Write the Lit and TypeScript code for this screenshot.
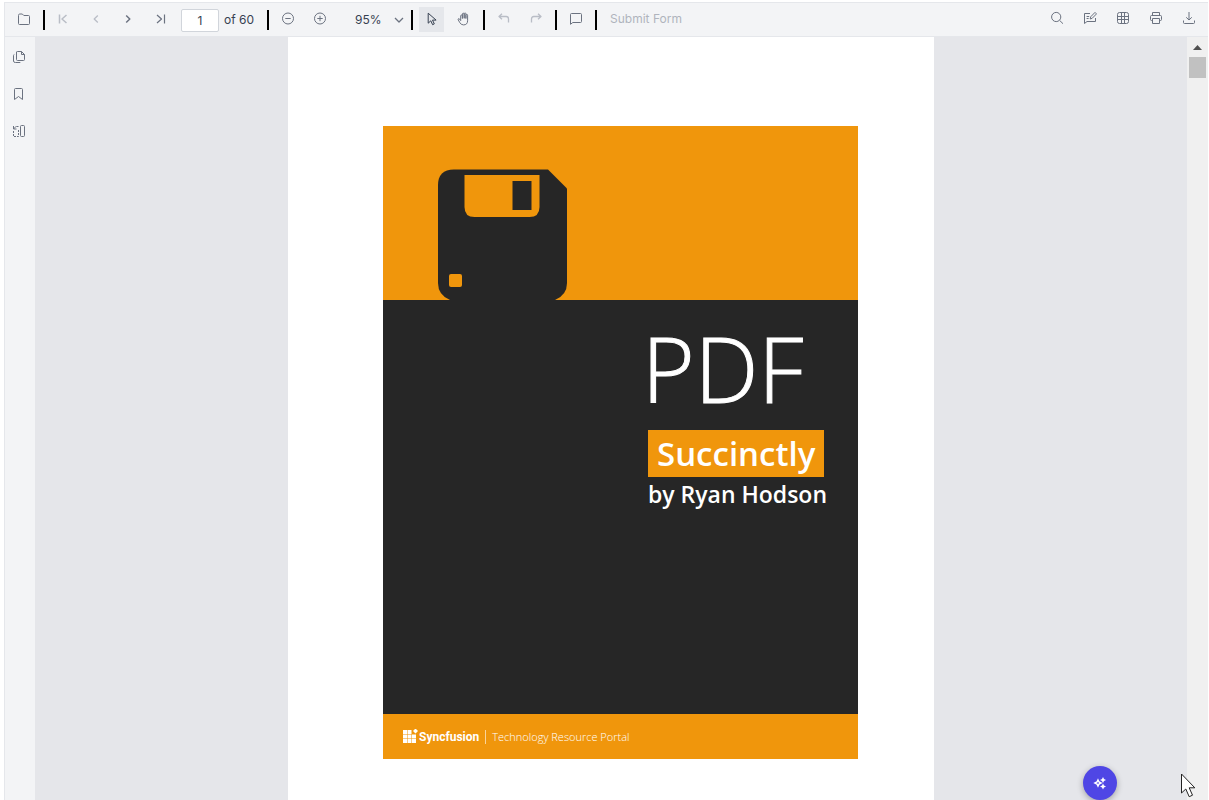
import { LitElement, html, css, svg } from "lit";
import { customElement, property, state } from "lit/decorators.js";

const icons = {
  folder: svg`<path d="M1.500 3.500q0-1.500 1.200-1.500h2.600l1.500 1.500h4.700q1 0 1 1v7q0 1-1 1h-9q-1 0-1-1z"/>`,
  first: svg`<path stroke-width="1.500" d="M2.500 2.500v9M9.500 3 5 7l4.500 4"/>`,
  prev: svg`<path stroke-width="1.300" d="M8.800 3.500 5.200 7l3.600 3.500"/>`,
  next: svg`<path stroke-width="1.500" d="M5.200 3.500 8.800 7l-3.600 3.500"/>`,
  last: svg`<path stroke-width="1.200" d="M11.500 2.500v9M4 3l4.500 4L4 11"/>`,
  zoomOut: svg`<circle cx="7" cy="6.500" r="5.500"/><path d="M4.300 6.500h5.400"/>`,
  zoomIn: svg`<circle cx="7" cy="6.500" r="5.500"/><path d="M4.300 6.500h5.400M7 3.800v5.400"/>`,
  chevron: svg`<path stroke-width="1.300" d="M3 5l4 4 4-4"/>`,
  select: svg`<path d="M3.200 1.200v10l2.600-2.400 1.800 3.900 1.700-.8-1.800-3.800h3.600z"/>`,
  hand: svg`<path d="M3.700 8.600V3.800q.1-.8.800-.8t.9.800v2.700V2q.1-.8.900-.8t.9.800v4.300V1.800q.1-.8.900-.8t.8.800v4.700V3.200q.1-.8.900-.8t.8.800v5.600q-.1 4.100-4.100 4.100-2.500 0-3.700-2.300L1.200 7.800q-.4-1 .4-1.200.6-.1 1 .5z"/>`,
  undo: svg`<path stroke-width="1.300" d="M5 1.700 2 4.500l3 2.800M2.200 4.500h7q2.300 0 2.300 2.400v3.600"/>`,
  redo: svg`<path stroke-width="1.300" d="m9 1.700 3 2.800-3 2.800M11.800 4.500h-7Q2.500 4.500 2.500 6.900v3.600"/>`,
  comment: svg`<path d="M1.500 12.300V2.500q0-1 1-1h9q1 0 1 1v7q0 1-1 1H3.800z"/>`,
  search: svg`<circle cx="6.200" cy="6" r="4.600"/><path d="m9.600 9.400 3.400 3.300"/>`,
  annotate: svg`<path d="M7 2.500H1.500v10L4 10.500h8.500V7M3.600 5.500h2.600M3.600 7.500h2M7.200 8l.5-2.200L12 1.400l1.500 1.500-4.300 4.400z"/>`,
  form: svg`<rect x="1.500" y="1.500" width="11" height="11" rx="2"/><path d="M5.500 1.500v11M8.500 1.500v11M1.500 5.500h11M1.500 8.500h11"/>`,
  print: svg`<path d="M3.500 4.500v-3h7v3M3.500 9.500h-1q-1 0-1-1v-3q0-1 1-1h9q1 0 1 1v3q0 1-1 1h-1M3.500 7.500h7v5h-7z"/>`,
  download: svg`<path d="M7 1v8M4.200 6.300 7 9l2.800-2.700M1.500 9.500v2q0 1 1 1h9q1 0 1-1v-2"/>`,
  pages: svg`<path d="M4.500 2q0-.5 1-.5h4l3 3v5q0 1-1 1h-6q-1 0-1-1zM9.500 1.500v3h3M2.300 4.500q-.8.200-.8 1V11q0 1.500 2 1.500h4.800"/>`,
  bookmark: svg`<path d="M2.500 2.500q0-1 1-1h6q1 0 1 1v10l-4-3-4 3z"/>`,
  organize: svg`<rect x="8.500" y="1.500" width="4" height="11" rx="1"/><path d="M6.500 2.500h-2M1.500 2v3h3M1.500 5l2.800-2.800"/><path stroke-dasharray="2 1" d="M1.500 7v5.500h5V5"/>`,
};
type IconName = keyof typeof icons;

@customElement("pdf-icon")
class PdfIcon extends LitElement {
  static styles = css`
    :host { display: block; width: 14px; height: 14px; }
    svg { display: block; width: 14px; height: 14px; fill: none; stroke: currentColor; stroke-linejoin: round; }
  `;
  @property() name: IconName = "folder";
  render() {
    return html`<svg viewBox="0 0 14 14" aria-hidden="true">${icons[this.name]}</svg>`;
  }
}

@customElement("pdf-toolbar")
class PdfToolbar extends LitElement {
  static styles = css`
    :host {
      display: flex; align-items: center; justify-content: space-between;
      height: 34px; padding: 0 7px 0 6px; box-sizing: border-box;
      background: #f3f4f6; border-bottom: 1px solid #e5e7eb;
      font: 12px/16px Inter, sans-serif; color: #374151;
    }
    .group { display: flex; align-items: center; gap: 7px; }
    .actions { gap: 8px; }
    .tool {
      display: grid; place-items: center; width: 25px; height: 25px; box-sizing: border-box;
      padding: 0 0 1px 1px; border: 0; background: none; color: #6b7280;
    }
    .actions .tool { padding-bottom: 3px; }
    .tool:disabled { color: #b9bdc6; }
    .active { background: #e5e7eb; color: #374151; }
    .line { width: 2px; height: 20px; margin-right: -1px; background: #000; }
    .pager { display: flex; align-items: center; gap: 5px; margin: 0 6px 0 2px; padding-top: 1px; }
    .page {
      width: 38px; height: 23px; box-sizing: border-box; padding: 0;
      border: 1px solid #d1d5db; border-radius: 2px; background: #fff;
      text-align: center; font: inherit; color: inherit;
    }
    .zoom { display: grid; grid-template-columns: 1fr 14px; align-items: center; width: 65px; color: #6b7280; }
    .level {
      grid-area: 1 / 1 / 2 / 3; height: 25px; padding: 0 0 0 16px; border: 0;
      appearance: none; background: none; font: inherit; color: #374151;
    }
    .arrow { grid-area: 1 / 2; margin: 0 -2px 0 2px; pointer-events: none; }
    .submit { padding: 0 7px 1px; border: 0; background: none; font: inherit; color: #b0b4bd; }
  `;
  @state() private mode = "select";

  private tool(icon: IconName, label: string, disabled = false) {
    return html`<button class="tool" aria-label=${label} title=${label} ?disabled=${disabled}>
      <pdf-icon name=${icon}></pdf-icon></button>`;
  }
  private modeTool(icon: IconName, label: string) {
    const on = this.mode === icon;
    return html`<button class="tool ${on ? "active" : ""}" aria-label=${label} aria-pressed=${on}
      @click=${() => (this.mode = icon)}><pdf-icon name=${icon}></pdf-icon></button>`;
  }
  render() {
    const line = html`<span class="line"></span>`;
    return html`
      <div class="group">
        ${this.tool("folder", "Open file")} ${line}
        ${this.tool("first", "First page", true)} ${this.tool("prev", "Previous page", true)}
        ${this.tool("next", "Next page")} ${this.tool("last", "Last page")}
        <label class="pager"><input class="page" aria-label="Page number" .value=${"1"} /><span>of 60</span></label>
        ${line} ${this.tool("zoomOut", "Zoom out")} ${this.tool("zoomIn", "Zoom in")}
        <label class="zoom">
          <select class="level" aria-label="Zoom level"><option>95%</option><option>100%</option><option>125%</option></select>
          <pdf-icon class="arrow" name="chevron"></pdf-icon>
        </label>
        ${line} ${this.modeTool("select", "Text selection")} ${this.modeTool("hand", "Pan")}
        ${line} ${this.tool("undo", "Undo", true)} ${this.tool("redo", "Redo", true)}
        ${line} ${this.tool("comment", "Add comment")} ${line}
        <button class="submit" disabled>Submit Form</button>
      </div>
      <div class="group actions">
        ${this.tool("search", "Search")} ${this.tool("annotate", "Annotate")}
        ${this.tool("form", "Form designer")} ${this.tool("print", "Print")} ${this.tool("download", "Download")}
      </div>`;
  }
}

@customElement("book-cover")
class BookCover extends LitElement {
  static styles = css`
    :host { display: block; background: #262626; color: #fff; font-family: "Open Sans", "Noto Sans", sans-serif; }
    .band { display: flex; padding: 43px 55px 0; background: #f0960c; }
    .disk { display: block; width: 129px; height: 131px; }
    .body { display: flex; flex-direction: column; align-items: flex-start; height: 414px; padding-left: 265px; box-sizing: border-box; }
    .title { margin: 18px 0 0 -6px; font-size: 90px; line-height: 100px; font-weight: 300; -webkit-text-stroke: 1px #fff; }
    .tag { margin: 12px 0 0; padding: 0 9px; background: #f0960c; font-size: 33px; line-height: 47px; font-weight: 600; white-space: nowrap; }
    .author { margin: 0; font-size: 23px; line-height: 34px; font-weight: 600; white-space: nowrap; }
    .foot { display: flex; align-items: center; gap: 6px; height: 45px; padding: 0 20px; box-sizing: border-box; background: #f0960c; }
    .brand { display: flex; align-items: center; font: 700 12px/16px Roboto, sans-serif; }
    .mark { width: 16px; height: 16px; }
    .rule { width: 1px; height: 14px; background: #f9d49b; }
    .portal { padding-top: 1px; font-size: 11px; line-height: 16px; font-weight: 300; white-space: nowrap; }
  `;
  render() {
    return html`
      <div class="band">
        <svg class="disk" viewBox="0 0 129 131" aria-hidden="true">
          <path fill="#262626" d="M16 .500h94l19 19V114q0 12-12 17H12Q0 126 0 114V16.500Q0 .500 16 .500z"/>
          <path fill="#f0960c" d="M26.500 6h75v32q0 10-10 10h-55q-10 0-10-10z"/>
          <path fill="#262626" d="M74.500 12h19v29h-19z"/>
          <rect fill="#f0960c" x="11" y="105" width="13" height="13" rx="2"/>
        </svg>
      </div>
      <div class="body">
        <h1 class="title">PDF</h1>
        <p class="tag">Succinctly</p>
        <p class="author">by Ryan Hodson</p>
      </div>
      <div class="foot">
        <span class="brand">
          <svg class="mark" viewBox="0 0 16 16" fill="#fff" aria-hidden="true">
            <path d="M0 1h4v4H0zM4.500 1h4v4h-4zM0 5.500h4v4H0zM4.500 5.500h4v4h-4zM9 5.500h4v4H9zM0 10h4v4H0zM4.500 10h4v4h-4zM9 10h4v4H9zM12.500-.500 15 2l-2.500 2.500L10 2z"/>
          </svg>Syncfusion</span>
        <span class="rule"></span>
        <span class="portal">Technology Resource Portal</span>
      </div>`;
  }
}

@customElement("app-root")
class AppRoot extends LitElement {
  static styles = css`
    :host {
      display: flex; flex-direction: column; position: relative; height: 100vh;
      box-sizing: border-box; padding: 2px 1px 0 4px; overflow: hidden; background: #fff;
    }
    .viewer { flex: 1; min-height: 0; display: flex; flex-direction: column; border: 1px solid #e5e7eb; border-bottom: 0; border-right: 0; }
    .main { flex: 1; min-height: 0; display: flex; }
    .side { display: flex; flex-direction: column; gap: 12px; width: 30px; padding: 8px 0 0 2px; box-sizing: border-box; background: #f3f4f6; }
    .tab { display: grid; place-items: center; width: 25px; height: 25px; box-sizing: border-box; padding: 0 1px 1px 0; border: 0; background: none; color: #6b7280; }
    .canvas { flex: 1; overflow: hidden; background: #e5e6ea; }
    .sheet { width: 646px; min-height: 836px; margin: 0 auto; padding: 89px 76px 0 95px; box-sizing: border-box; background: #fff; }
    .scroll { display: flex; flex-direction: column; align-items: center; width: 21px; padding-top: 8px; box-sizing: border-box; background: #f0f0f0; }
    .up { width: 9px; height: 5px; fill: #505050; }
    .thumb { width: 17px; height: 21px; margin-top: 7px; background: #c1c1c1; }
    .assist {
      position: absolute; right: 92px; bottom: 0; display: grid; place-items: center;
      width: 34px; height: 34px; padding: 0; border: 0; border-radius: 50%;
      background: #4f46e5; box-shadow: 0 2px 6px rgba(0, 0, 0, 0.3);
    }
    .spark { width: 14px; height: 14px; fill: none; stroke: #fff; stroke-width: 1.5; }
    .pointer { position: absolute; right: 13px; bottom: 1px; width: 16px; height: 26px; fill: #fff; stroke: #222; }
  `;
  render() {
    const tabs: [IconName, string][] = [["pages", "Thumbnails"], ["bookmark", "Bookmarks"], ["organize", "Organize pages"]];
    return html`
      <div class="viewer">
        <pdf-toolbar></pdf-toolbar>
        <div class="main">
          <nav class="side">
            ${tabs.map(([icon, label]) => html`<button class="tab" aria-label=${label}><pdf-icon name=${icon}></pdf-icon></button>`)}
          </nav>
          <main class="canvas"><article class="sheet"><book-cover></book-cover></article></main>
          <div class="scroll">
            <svg class="up" viewBox="0 0 9 5"><path d="M4.500 0 9 5H0z"/></svg>
            <div class="thumb"></div>
          </div>
        </div>
      </div>
      <button class="assist" aria-label="AI assistant">
        <svg class="spark" viewBox="0 0 14 14">
          <path d="M5 4l1 2 2 1-2 1-1 2-1-2-2-1 2-1z"/>
          <path fill="#fff" stroke="none" d="M10 1l1 2 2 1-2 1-1 2-1-2-2-1 2-1zM10 7.500l1 2 2 1-2 1-1 2-1-2-2-1 2-1z"/>
        </svg>
      </button>
      <svg class="pointer" viewBox="0 0 16 26" aria-hidden="true"><path d="M1.500 1v19l4.300-4 3.400 7.700 3.300-1.500L9.200 14.800h5.600z"/></svg>`;
  }
}
